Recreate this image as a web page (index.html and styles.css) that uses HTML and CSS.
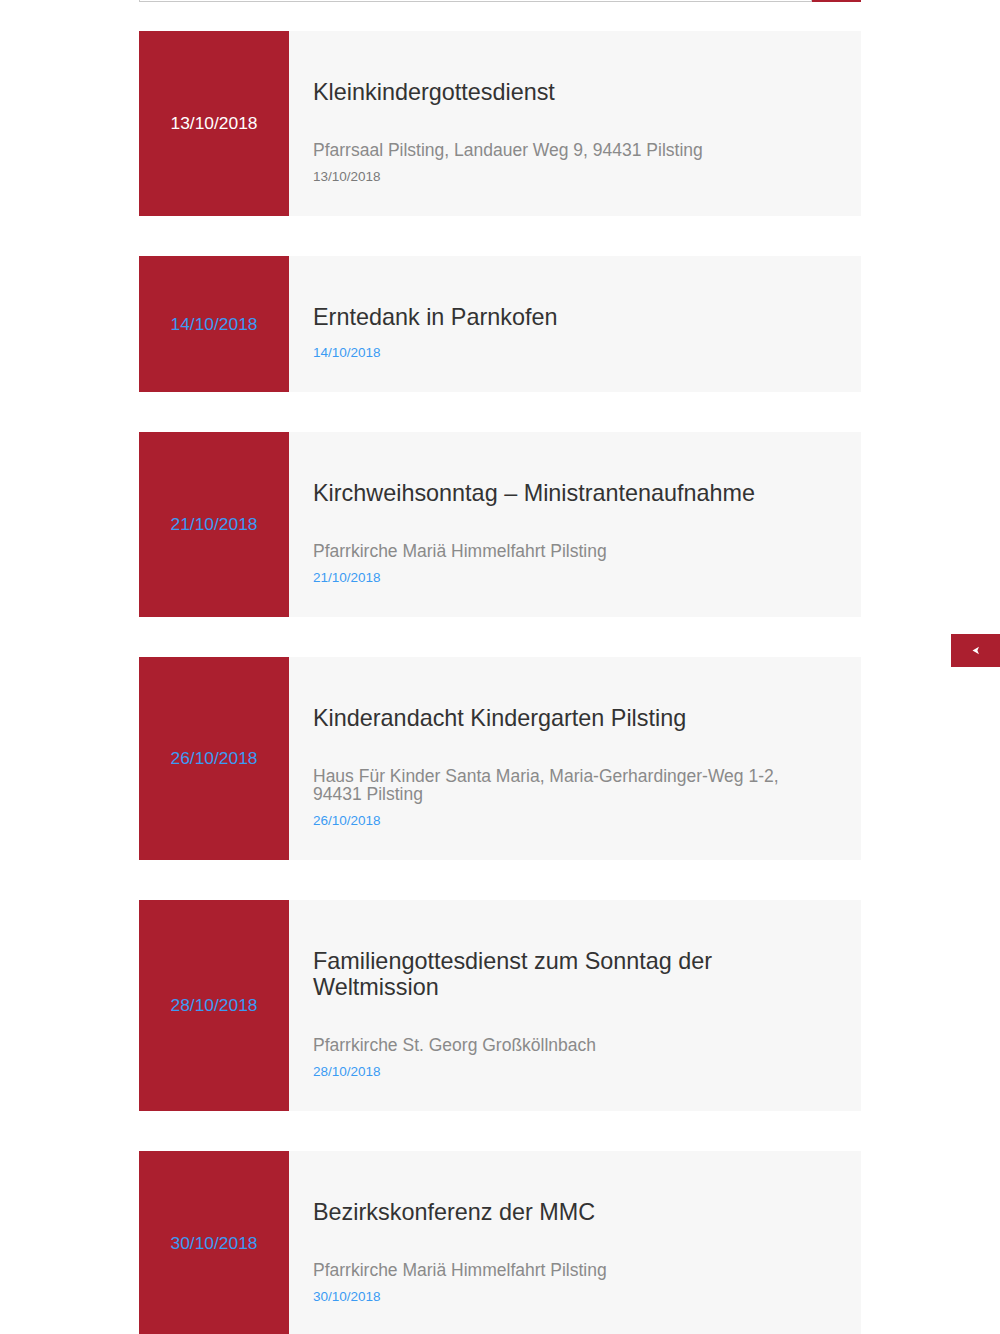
FILE: index.html
```html
<!DOCTYPE html>
<html lang="de">
<head>
<meta charset="utf-8">
<title>Termine</title>
<link rel="stylesheet" href="styles.css">
</head>
<body>
<div class="page">
  <div class="search">
    <div class="search-input"></div>
    <div class="search-btn"></div>
  </div>

  <ul class="events">
    <li class="event">
      <div class="event-datebox"><span class="datebox-text plain">13/10/2018</span></div>
      <div class="event-body">
        <h2 class="event-title">Kleinkindergottesdienst</h2>
        <p class="event-place">Pfarrsaal Pilsting, Landauer Weg 9, 94431 Pilsting</p>
        <p class="event-date plain">13/10/2018</p>
      </div>
    </li>
    <li class="event">
      <div class="event-datebox"><a class="datebox-text" href="#">14/10/2018</a></div>
      <div class="event-body">
        <h2 class="event-title">Erntedank in Parnkofen</h2>
        <p class="event-date"><a href="#">14/10/2018</a></p>
      </div>
    </li>
    <li class="event">
      <div class="event-datebox"><a class="datebox-text" href="#">21/10/2018</a></div>
      <div class="event-body">
        <h2 class="event-title">Kirchweihsonntag – Ministrantenaufnahme</h2>
        <p class="event-place">Pfarrkirche Mariä Himmelfahrt Pilsting</p>
        <p class="event-date"><a href="#">21/10/2018</a></p>
      </div>
    </li>
    <li class="event">
      <div class="event-datebox"><a class="datebox-text" href="#">26/10/2018</a></div>
      <div class="event-body">
        <h2 class="event-title">Kinderandacht Kindergarten Pilsting</h2>
        <p class="event-place">Haus Für Kinder Santa Maria, Maria-Gerhardinger-Weg 1-2, 94431 Pilsting</p>
        <p class="event-date"><a href="#">26/10/2018</a></p>
      </div>
    </li>
    <li class="event">
      <div class="event-datebox"><a class="datebox-text" href="#">28/10/2018</a></div>
      <div class="event-body">
        <h2 class="event-title">Familiengottesdienst zum Sonntag der Weltmission</h2>
        <p class="event-place">Pfarrkirche St. Georg Großköllnbach</p>
        <p class="event-date"><a href="#">28/10/2018</a></p>
      </div>
    </li>
    <li class="event">
      <div class="event-datebox"><a class="datebox-text" href="#">30/10/2018</a></div>
      <div class="event-body">
        <h2 class="event-title">Bezirkskonferenz der MMC</h2>
        <p class="event-place">Pfarrkirche Mariä Himmelfahrt Pilsting</p>
        <p class="event-date"><a href="#">30/10/2018</a></p>
      </div>
    </li>
  </ul>
</div>

<a class="side-tab" href="#" aria-label="Öffnen">
  <svg width="8" height="9" viewBox="0 0 8 9"><path d="M0.5 4.5 L7 0.8 L5.4 4.5 L7 8.2 Z" fill="#fff"/></svg>
</a>
</body>
</html>
```

FILE: styles.css
```css
html, body {
  margin: 0;
  padding: 0;
  background: #fff;
}
body {
  font-family: "Liberation Sans", Arial, Helvetica, sans-serif;
  color: #333;
}
.page {
  width: 722px;
  margin: 0 auto;
}
.search {
  display: flex;
  height: 2px;
}
.search-input {
  flex: 1;
  border-left: 1px solid #c8c8c8;
  border-right: 1px solid #c8c8c8;
  border-bottom: 1px solid #c8c8c8;
  box-sizing: border-box;
}
.search-btn {
  width: 49px;
  background: #ab1f2f;
}
.events {
  list-style: none;
  margin: 29px 0 0;
  padding: 0;
  display: flex;
  flex-direction: column;
  gap: 40px;
}
.event {
  display: flex;
  background: #f7f7f7;
}
.event-datebox {
  width: 150px;
  flex: none;
  background: #ab1f2f;
  display: flex;
  align-items: center;
  justify-content: center;
}
.datebox-text {
  font-size: 17.4px;
  color: #3b9bf3;
  text-decoration: none;
}
.datebox-text.plain {
  color: #fff;
}
.event-body {
  flex: 1;
  padding: 48px 40px 30px 24px;
}
.event-title {
  margin: 0 0 14px;
  font-size: 23.4px;
  line-height: 26px;
  font-weight: normal;
  color: #333;
}
.event-place {
  margin: 36px 0 9px;
  font-size: 17.5px;
  line-height: 18px;
  color: #8a8a8a;
  max-width: 500px;
}
.event-date {
  margin: 0;
  font-size: 13.5px;
  line-height: 18px;
}
.event-date a {
  color: #3b9bf3;
  text-decoration: none;
}
.event-date.plain {
  color: #7a7a7a;
}
.side-tab {
  position: fixed;
  right: 0;
  top: 634px;
  width: 49px;
  height: 33px;
  background: #ab1f2f;
  display: flex;
  align-items: center;
  justify-content: center;
}
```
